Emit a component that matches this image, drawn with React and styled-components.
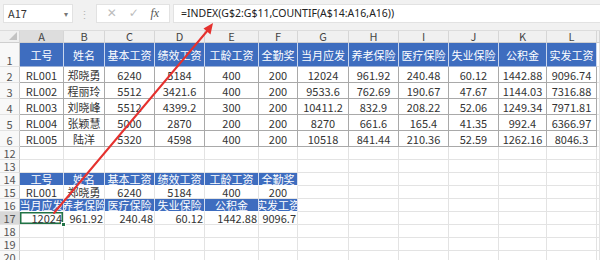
import React from "react";
import styled, { createGlobalStyle, css } from "styled-components";

const Global = createGlobalStyle`
  html, body { margin: 0; padding: 0; background: #ffffff; }
  body { font-family: "Noto Sans CJK SC", "Noto Sans", sans-serif; }
`;

const COLS = "20px 44px 41px 50px 50px 54px 39px 51px 50px 50px 50px 48px 50px 1fr";

const Page = styled.div`
  position: relative;
  width: 600px;
  height: 260px;
  overflow: hidden;
  background: #fff;
`;

const Toolbar = styled.div`
  display: flex;
  align-items: flex-start;
  height: 31px;
  box-sizing: border-box;
  padding: 4px 0 0 3px;
  background: #f1f1f1;
  border-bottom: 1px solid #dcdcdc;
`;

const Box = styled.div`
  display: flex;
  align-items: center;
  height: 19px;
  box-sizing: border-box;
  background: #fff;
  border: 1px solid #e2e2e2;
  font-size: 11px;
  line-height: 13px;
  color: #333;
`;

const NameBox = styled(Box)`
  width: 70px;
  padding: 0 4px;
  justify-content: space-between;
`;

const Caret = styled.span`
  font-size: 8px;
  color: #777;
`;

const Dots = styled.div`
  width: 23px;
  height: 19px;
  display: flex;
  align-items: center;
  justify-content: center;
  color: #b5b5b5;
  font-size: 11px;
`;

const FxBox = styled(Box)`
  width: 74px;
  justify-content: space-around;
  padding: 0 4px;
`;

const ToolIcon = styled.span`
  color: ${(p) => (p.$dark ? "#555" : "#bcbcbc")};
  font-size: 12px;
  font-family: ${(p) => (p.$dark ? '"Liberation Serif", serif' : '"DejaVu Sans", sans-serif')};
  font-style: ${(p) => (p.$dark ? "italic" : "normal")};
`;

const FormulaBox = styled(Box)`
  flex: 1;
  margin-left: 3px;
  padding-left: 7px;
  font-family: "Noto Sans", sans-serif;
  font-size: 10.5px;
  color: #222;
  border-right: none;
`;

const Row = styled.div`
  display: grid;
  grid-template-columns: ${COLS};
  height: ${(p) => p.$h}px;
`;

const ColHead = styled.div`
  box-sizing: border-box;
  display: flex;
  align-items: center;
  justify-content: center;
  font-size: 11px;
  line-height: 11px;
  color: #444;
  background: ${(p) => (p.$active ? "#dddddd" : "#f0f0f0")};
  border-right: 1px solid #d6d6d6;
  border-bottom: 1px solid #cfcfcf;
  position: relative;
`;

const Corner = styled(ColHead)`
  &::after {
    content: "";
    position: absolute;
    right: 2px;
    bottom: 2px;
    border-left: 8px solid transparent;
    border-bottom: 8px solid #c3c3c3;
  }
`;

const RowHead = styled.div`
  box-sizing: border-box;
  display: flex;
  align-items: flex-end;
  justify-content: center;
  font-size: 11px;
  line-height: 12px;
  color: #555;
  background: ${(p) => (p.$active ? "#d8d8d8" : "#f8f8f8")};
  border-right: 1px solid #c9c9c9;
  border-bottom: 1px solid #e2e2e2;
`;

const variants = {
  head: css`
    background: #3e6dbf;
    color: #fff;
    border-right: 1px solid #c9d6ee;
    border-bottom: 1px solid #9fb3d8;
    justify-content: center;
  `,
  lhead: css`
    background: #3e6dbf;
    color: #fff;
    border-right: 1px solid #d5def0;
    border-bottom: 1px solid #ffffff;
    justify-content: center;
  `,
  data: css`
    color: #333;
    border-right: 1px solid #a9a9a9;
    border-bottom: 1px solid #a9a9a9;
    justify-content: center;
  `,
  center: css`
    color: #333;
    border-right: 1px solid #e3e3e3;
    border-bottom: 1px solid #e3e3e3;
    justify-content: center;
  `,
  num: css`
    color: #333;
    border-right: 1px solid #e3e3e3;
    border-bottom: 1px solid #e3e3e3;
    justify-content: flex-end;
    padding-right: 1px;
  `,
  plain: css`
    border-right: 1px solid #e3e3e3;
    border-bottom: 1px solid #e3e3e3;
  `,
};

const Cell = styled.div`
  box-sizing: border-box;
  position: relative;
  display: flex;
  align-items: center;
  white-space: nowrap;
  overflow-x: clip;
  overflow-y: visible;
  font-size: 11px;
  line-height: 12px;
  ${(p) => variants[p.$v || "plain"]}
  ${(p) =>
    p.$selected &&
    css`
      overflow: visible;
      box-shadow: inset 0 0 0 1.5px #217346;
      &::after {
        content: "";
        position: absolute;
        right: -3px;
        bottom: -3px;
        width: 5px;
        height: 5px;
        background: #217346;
        border: 1px solid #fff;
        box-sizing: border-box;
        z-index: 2;
      }
    `}
`;

const Overlay = styled.svg`
  position: absolute;
  left: 0;
  top: 0;
  pointer-events: none;
`;

const LETTERS = ["A", "B", "C", "D", "E", "F", "G", "H", "I", "J", "K", "L", ""];
const HEAD1 = ["工号", "姓名", "基本工资", "绩效工资", "工龄工资", "全勤奖", "当月应发", "养老保险", "医疗保险", "失业保险", "公积金", "实发工资"];
const DATA = [
  ["RL001", "郑晓勇", "6240", "5184", "400", "200", "12024", "961.92", "240.48", "60.12", "1442.88", "9096.74"],
  ["RL002", "程丽玲", "5512", "3421.6", "400", "200", "9533.6", "762.69", "190.67", "47.67", "1144.03", "7316.88"],
  ["RL003", "刘晓峰", "5512", "4399.2", "300", "200", "10411.2", "832.9", "208.22", "52.06", "1249.34", "7971.81"],
  ["RL004", "张颖慧", "5000", "2870", "200", "200", "8270", "661.6", "165.4", "41.35", "992.4", "6366.97"],
  ["RL005", "陆洋", "5320", "4598", "400", "200", "10518", "841.44", "210.36", "52.59", "1262.16", "8046.3"],
];

const fill = (arr, v) => {
  const out = [];
  for (let i = 0; i < 13; i++) {
    out.push(i < arr.length ? { t: arr[i], v } : { t: "", v: "plain" });
  }
  return out;
};

const ROWS = [
  { n: "1", h: 24, cells: fill(HEAD1, "head") },
  ...DATA.map((d, i) => ({ n: String(i + 2), h: 16, cells: fill(d, "data") })),
  { n: "12", h: 13, cells: fill([], "plain") },
  { n: "13", h: 13, cells: fill([], "plain") },
  { n: "14", h: 13, cells: fill(HEAD1.slice(0, 6), "lhead") },
  { n: "15", h: 13, cells: fill(DATA[0].slice(0, 6), "center") },
  { n: "16", h: 13, cells: fill(HEAD1.slice(6), "lhead") },
  { n: "17", h: 13, active: true, cells: fill(["12024", "961.92", "240.48", "60.12", "1442.88", "9096.7"], "num") },
  { n: "18", h: 13, cells: fill([], "plain") },
  { n: "19", h: 13, cells: fill([], "plain") },
  { n: "20", h: 13, cells: fill([], "plain") },
];

export default function App() {
  return (
    <Page>
      <Global />
      <Toolbar>
        <NameBox>
          <span>A17</span>
          <Caret>▾</Caret>
        </NameBox>
        <Dots>⋮</Dots>
        <FxBox>
          <ToolIcon>✕</ToolIcon>
          <ToolIcon>✓</ToolIcon>
          <ToolIcon $dark>fx</ToolIcon>
        </FxBox>
        <FormulaBox>=INDEX(G$2:G$11,COUNTIF(A$14:A16,A16))</FormulaBox>
      </Toolbar>
      <Row $h={12}>
        <Corner />
        {LETTERS.map((l, i) => (
          <ColHead key={i} $active={l === "A"}>{l}</ColHead>
        ))}
      </Row>
      {ROWS.map((r) => (
        <Row key={r.n} $h={r.h}>
          <RowHead $active={r.active}>{r.n}</RowHead>
          {r.cells.map((c, i) => (
            <Cell key={i} $v={c.v} $selected={r.n === "17" && i === 0}>
              {c.t}
            </Cell>
          ))}
        </Row>
      ))}
      <Overlay width="600" height="260" viewBox="0 0 600 260">
        <line x1="54" y1="213" x2="208" y2="30" stroke="#e5312e" strokeWidth="2" strokeLinecap="round" />
        <polygon points="213,23 203.5,28.5 210.5,34.5" fill="#e5312e" />
      </Overlay>
    </Page>
  );
}
